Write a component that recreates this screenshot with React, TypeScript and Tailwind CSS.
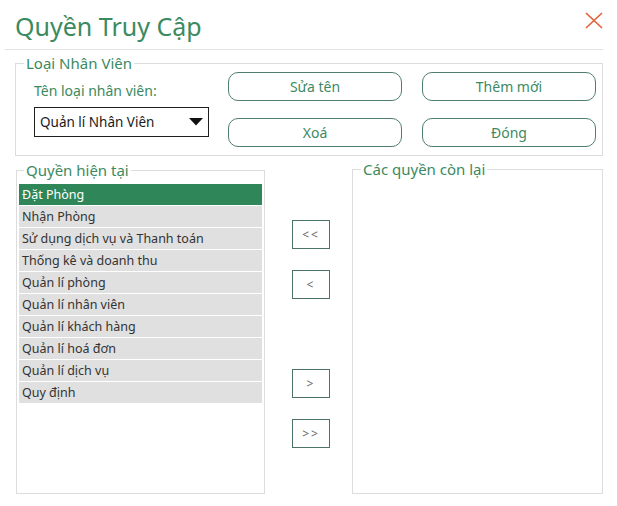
import React, { useState } from 'react';

const font = { fontFamily: '"Noto Sans", "Open Sans", sans-serif' };

const rights = [
  'Đặt Phòng',
  'Nhận Phòng',
  'Sử dụng dịch vụ và Thanh toán',
  'Thống kê và doanh thu',
  'Quản lí phòng',
  'Quản lí nhân viên',
  'Quản lí khách hàng',
  'Quản lí hoá đơn',
  'Quản lí dịch vụ',
  'Quy định',
];

// Rounded action button of the top group
const PillButton: React.FC<{ label: string }> = ({ label }) => (
  <button className="h-[29px] w-[174px] rounded-[10px] border border-[#4f7f6c] bg-white text-[14px] text-[#3d8a63]">
    {label}
  </button>
);

// Small square move button between the lists
const MoveButton: React.FC<{ label: string }> = ({ label }) => (
  <button className="h-[29px] w-[38px] border border-[#4c7466] bg-white text-[12px] tracking-[2px] text-[#666]">
    {label}
  </button>
);

const App: React.FC = () => {
  const [selected, setSelected] = useState(0);

  return (
    <div className="h-[506px] w-[617px] overflow-hidden bg-white" style={font}>
      {/* Header */}
      <div className="flex h-[49px] items-start justify-between">
        <h1 className="pl-[15px] pt-[9px] text-[25px] leading-[34px] text-[#3b8a60]">Quyền Truy Cập</h1>
        <button className="mr-[14px] mt-[12px] text-[#e2623c]" aria-label="Đóng">
          <svg width="18" height="17" viewBox="0 0 18 17" fill="none" stroke="currentColor" strokeWidth="1.7">
            <path d="M1 1 L17 16 M17 1 L1 16" />
          </svg>
        </button>
      </div>
      <div className="ml-[5px] w-[598px] border-t border-[#e2e2e2]" />

      {/* Loại Nhân Viên */}
      <div className="relative ml-[15px] mt-[13px] flex h-[93px] w-[588px] border border-[#dcdcdc] pl-[18px] pt-[8px]">
        <span className="absolute left-[8px] top-[-11px] bg-white px-[2px] text-[15px] leading-[20px] text-[#3b8a60]">
          Loại Nhân Viên
        </span>
        <div className="flex w-[175px] flex-col pt-[9px]">
          <span className="text-[14px] leading-[19px] text-[#3b8a60]">Tên loại nhân viên:</span>
          <div className="mt-[7px] flex h-[30px] items-center justify-between border border-[#1e1e1e] pl-[5px] pr-[5px]">
            <span className="text-[13.5px] text-[#1a1a1a]">Quản lí Nhân Viên</span>
            <svg width="14" height="8" viewBox="0 0 14 8">
              <path d="M0 0 H14 L7 7.5 Z" fill="#111" />
            </svg>
          </div>
        </div>
        <div className="ml-[19px] grid grid-cols-[174px_174px] gap-x-[20px] gap-y-[17px] content-start">
          <PillButton label="Sửa tên" />
          <PillButton label="Thêm mới" />
          <PillButton label="Xoá" />
          <PillButton label="Đóng" />
        </div>
      </div>

      {/* Lists */}
      <div className="mt-[13px] flex items-start">
        <div className="relative ml-[16px] mt-[1px] h-[324px] w-[249px] border border-[#dcdcdc] px-[2px] pt-[13px]">
          <span className="absolute left-[7px] top-[-11px] bg-white px-[2px] text-[15px] leading-[20px] text-[#3b8a60]">
            Quyền hiện tại
          </span>
          <ul className="flex flex-col gap-[1px]">
            {rights.map((r, i) => (
              <li
                key={r}
                onClick={() => setSelected(i)}
                className={`h-[21px] cursor-default pl-[3px] text-[12.5px] leading-[21px] ${
                  i === selected ? 'bg-[#2f8658] text-white' : 'bg-[#e0e0e0] text-[#333]'
                }`}
              >
                {r}
              </li>
            ))}
          </ul>
        </div>

        <div className="ml-[27px] flex flex-col pt-[51px]">
          <MoveButton label="<<" />
          <div className="mt-[21px]">
            <MoveButton label="<" />
          </div>
          <div className="mt-[70px]">
            <MoveButton label=">" />
          </div>
          <div className="mt-[21px]">
            <MoveButton label=">>" />
          </div>
        </div>

        <div className="relative ml-[22px] h-[325px] w-[251px] border border-[#dcdcdc]">
          <span className="absolute left-[8px] top-[-11px] bg-white px-[2px] text-[15px] leading-[20px] text-[#3b8a60]">
            Các quyền còn lại
          </span>
        </div>
      </div>
    </div>
  );
};

export default App;
